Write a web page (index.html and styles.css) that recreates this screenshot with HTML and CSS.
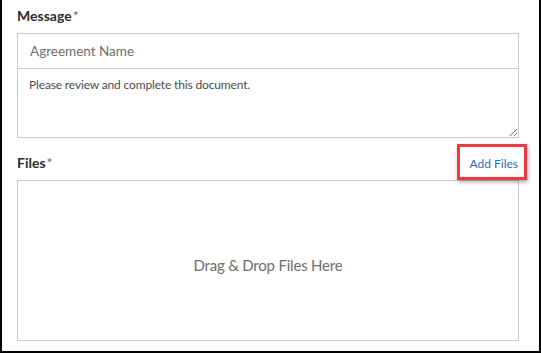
FILE: index.html
```html
<!DOCTYPE html>
<html>
<head>
    <title>Send Agreement</title>
    <link rel="stylesheet" href="styles.css">
</head>
<body>
    <div class="frame">
        <div class="field-label">Message<span class="req">*</span></div>
        <div class="message-box">
            <input type="text" class="name-input" placeholder="Agreement Name">
            <textarea class="message-text">Please review and complete this document.</textarea>
        </div>

        <div class="files-head">
            <div class="field-label">Files<span class="req">*</span></div>
            <a href="#" class="add-files">Add Files</a>
            <span class="highlight"></span>
        </div>
        <div class="drop-zone">Drag &amp; Drop Files Here</div>
    </div>
</body>
</html>
```

FILE: styles.css
```css
body {
    margin: 0;
    background: #fff;
    font-family: Lato, "Open Sans", sans-serif;
}
.frame {
    box-sizing: border-box;
    height: 353px;
    border: 2px solid #000;
    border-top: none;
    padding: 0 20px 0 15px;
}
.field-label {
    font-size: 14px;
    font-weight: bold;
    color: #2c2c2c;
    padding-top: 7px;
    height: 33px;
    box-sizing: border-box;
}
.req {
    font-weight: normal;
    color: #6e6e6e;
    margin-left: 1px;
}
.message-box {
    border: 1px solid #cacaca;
    display: flex;
    flex-direction: column;
}
.name-input {
    height: 34px;
    border: none;
    border-bottom: 1px solid #cacaca;
    padding: 0 12px;
    font-family: inherit;
    font-size: 13.5px;
    color: #4b4b4b;
    outline: none;
}
.name-input::placeholder {
    color: #6e6e6e;
}
.message-text {
    height: 68px;
    box-sizing: border-box;
    border: none;
    resize: vertical;
    padding: 8px 11px;
    font-family: inherit;
    font-size: 12px;
    letter-spacing: -0.15px;
    color: #4b4b4b;
    outline: none;
}
.files-head {
    position: relative;
    display: flex;
    justify-content: space-between;
    align-items: flex-start;
    margin-top: 16px;
    height: 26px;
}
.files-head .field-label {
    padding-top: 0;
    height: auto;
}
.add-files {
    font-size: 12px;
    color: #2b6cc4;
    text-decoration: none;
    margin-right: 1px;
    margin-top: 2px;
}
.highlight {
    position: absolute;
    right: -8px;
    top: -10px;
    width: 64px;
    height: 30px;
    border: 3px solid #ef3b3f;
    box-shadow: 1px 2px 4px rgba(0, 0, 0, 0.35);
}
.drop-zone {
    height: 149px;
    padding-top: 10px;
    border: 1px solid #cacaca;
    display: flex;
    align-items: center;
    justify-content: center;
    font-size: 15px;
    line-height: 1;
    letter-spacing: -0.2px;
    color: #6e6e6e;
}
```
